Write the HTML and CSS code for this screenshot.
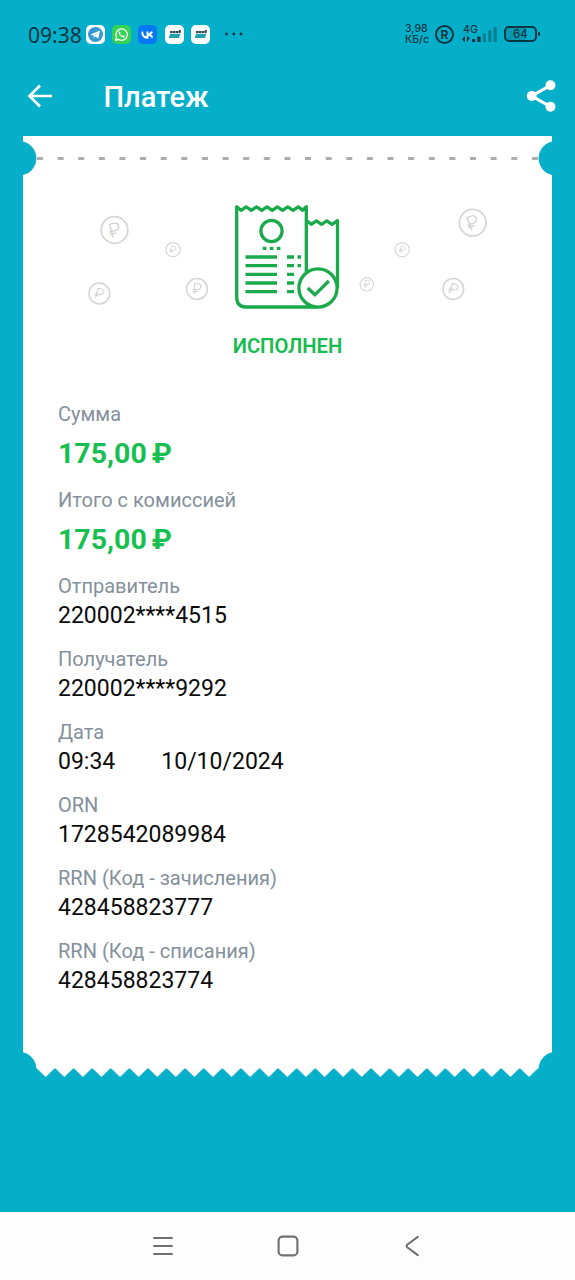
FILE: index.html
```html
<!DOCTYPE html>
<html lang="ru">
<head>
    <meta charset="UTF-8">
    <meta name="viewport" content="width=device-width, initial-scale=1.0">
    <title>Платеж</title>
    <link rel="stylesheet" href="styles.css">
</head>
<body>
    <div class="status-bar">
        <span class="clock">09:38</span>
        <div class="notifications">
            <svg class="app-icon" viewBox="0 0 19 19">
                <rect width="19" height="19" rx="5" fill="#fff"/>
                <circle cx="9.5" cy="9.5" r="7.5" fill="#3499d2"/>
                <path d="M4.5 9.4L14 5.6L12.4 13.6L9.4 11.4L7.8 12.8L7.6 10.6Z" fill="#fff"/>
                <path d="M7.6 10.6L12 7.3L8.6 11Z" fill="#9cc9e6"/>
            </svg>
            <svg class="app-icon" viewBox="0 0 19 19">
                <rect width="19" height="19" rx="5" fill="#35d255"/>
                <path d="M3.7 15.3L4.6 12.2A5.7 5.7 0 1 1 6.8 14.5Z" fill="none" stroke="#fff" stroke-width="1.3" stroke-linejoin="round"/>
                <path d="M7.1 6.4C6 7.6 6.7 9.3 8.2 10.8C9.7 12.3 11.6 13 12.5 11.9L12.6 11L11 10.2L10.2 11C9.2 10.6 8.3 9.7 7.9 8.8L8.6 8L7.9 6.3Z" fill="#fff"/>
            </svg>
            <svg class="app-icon" viewBox="0 0 19 19">
                <rect width="19" height="19" rx="5" fill="#0877f5"/>
                <path d="M4.2 6.6C4.4 10.5 6.2 12.7 9.5 12.7V6.6M9.5 9.8C11.6 9.6 13.3 8.3 14 6.6M9.9 9.6C12 9.8 13.7 11 14.4 12.7" fill="none" stroke="#fff" stroke-width="1.9"/>
            </svg>
            <svg class="app-icon" viewBox="0 0 19 19">
                <rect width="19" height="19" rx="5" fill="#fff"/>
                <path d="M5 7H15.5M14.8 5V8" stroke="#36434a" stroke-width="2" stroke-dasharray="2.4 .4"/>
                <path d="M5.2 8.8H15.4L14 13H3.6Z" fill="#259fac"/>
            </svg>
            <svg class="app-icon" viewBox="0 0 19 19">
                <rect width="19" height="19" rx="5" fill="#fff"/>
                <path d="M5 7H15.5M14.8 5V8" stroke="#36434a" stroke-width="2" stroke-dasharray="2.4 .4"/>
                <path d="M5.2 8.8H15.4L14 13H3.6Z" fill="#259fac"/>
            </svg>
        </div>
        <svg class="more" viewBox="0 0 20 4">
            <circle cx="2.5" cy="2" r="1.4"/>
            <circle cx="9.8" cy="2" r="1.4"/>
            <circle cx="17" cy="2" r="1.4"/>
        </svg>
        <div class="speed">
            <span class="speed-value">3,98</span>
            <span class="speed-unit">КБ/с</span>
        </div>
        <span class="registered">R</span>
        <div class="network">
            <span class="network-type">4G</span>
            <svg class="signal" viewBox="0 0 36 17">
                <path d="M2.2 10.5V15.5M5.5 10.5V15.5" stroke="#0b3742" stroke-width="1.3"/>
                <path d="M-.5 13L2.8 15.7V11.8ZM8.2 12.7L5 10V14Z" fill="#0b3742"/>
                <path d="M10 13h3.3v3H10zM15.3 10.5h3.3V16h-3.3z" fill="#0b3742"/>
                <path d="M20.8 7.5H24V16h-3.2zM26.3 4.3h3.2V16h-3.2zM31.6 1h3.2v15h-3.2z" fill="#087e93"/>
            </svg>
        </div>
        <div class="battery"><span class="battery-level">64</span></div>
    </div>

    <header class="app-bar">
        <svg class="back" viewBox="0 0 26 26">
            <path d="M14 2.5L3.5 13L14 23.5M3.5 13H26" fill="none" stroke="#fff" stroke-width="2.7"/>
        </svg>
        <h1 class="title">Платеж</h1>
        <svg class="share" viewBox="0 0 30 32">
            <path d="M24.5 5.3L5.7 16L24.5 26.7" fill="none" stroke="#fff" stroke-width="3.1"/>
            <circle cx="24.5" cy="5.3" r="5"/>
            <circle cx="5.7" cy="16" r="5"/>
            <circle cx="24.5" cy="26.7" r="5"/>
        </svg>
    </header>

    <main class="receipt">
        <!-- perforated top edge -->
        <svg class="receipt-top" viewBox="0 0 529 48">
            <rect width="529" height="48" fill="#fff"/>
            <path d="M14 22.5H516" stroke="#adadad" stroke-width="3" stroke-dasharray="6 14.62"/>
            <circle cx="-3.7" cy="22.3" r="17.1" fill="#05aec9"/>
            <circle cx="532.7" cy="22.3" r="17.1" fill="#05aec9"/>
        </svg>

        <svg class="artwork" viewBox="23 184 529 140">
            <g class="coins">
                <g transform="translate(114.5 230)"><circle r="13.3" stroke-width="1.8"/><text y="7" font-size="20" transform="rotate(-17)">₽</text></g>
                <g transform="translate(173 249.7)"><circle r="7.1" stroke-width="1.1"/><text y="3.6" font-size="10.5" transform="rotate(10)">₽</text></g>
                <g transform="translate(99.3 293.5)"><circle r="10.4" stroke-width="1.5"/><text y="5.3" font-size="15" transform="rotate(15)">₽</text></g>
                <g transform="translate(197 289)"><circle r="10.4" stroke-width="1.5"/><text y="5.3" font-size="15">₽</text></g>
                <g transform="translate(472.7 222.7)"><circle r="13.3" stroke-width="1.8"/><text y="7" font-size="20" transform="rotate(-22)">₽</text></g>
                <g transform="translate(402.2 249.7)"><circle r="7.1" stroke-width="1.1"/><text y="3.6" font-size="10.5" transform="rotate(12)">₽</text></g>
                <g transform="translate(366.8 284.3)"><circle r="6.7" stroke-width="1.1"/><text y="3.6" font-size="10.5">₽</text></g>
                <g transform="translate(453.3 289)"><circle r="10.4" stroke-width="1.5"/><text y="5.3" font-size="15" transform="rotate(20)">₽</text></g>
            </g>
            <g fill="none" stroke="#1aa94b" stroke-width="3.3" stroke-linejoin="round">
                <path d="M317 307H246Q236.7 307 236.7 297V206.7L241 210.3L246.2 206.9L251.4 210.3L256.6 206.9L261.8 210.3L267 206.9L272.2 210.3L277.4 206.9L282.6 210.3L287.8 206.9L293 210.3L298.2 206.9L302.5 210.3L306.3 206.7V272"/>
                <path d="M307 221L311.2 224.3L316.4 220.9L321.6 224.3L326.8 220.9L332 224.3L337.5 220.7V288"/>
                <circle cx="271.5" cy="231" r="10.6"/>
                <circle cx="318" cy="288" r="19.1" fill="#fff"/>
                <path d="M307.7 288L314.9 294.8L328.8 281" stroke-linejoin="miter"/>
                <path d="M262.8 248.3H281" stroke-dasharray="3.6 3.4"/>
                <path d="M245.5 257H277M245.5 265.7H277M245.5 274.4H277M245.5 283H277M245.5 291.7H277"/>
                <path d="M287 257H294M287 265.7H294M287 274.4H294M287 283H294M287 291.7H294M297.5 257H301M297.5 265.7H301"/>
            </g>
        </svg>

        <p class="state">ИСПОЛНЕН</p>

        <dl class="details">
            <div class="row amount">
                <dt>Сумма</dt>
                <dd>175,00 ₽</dd>
            </div>
            <div class="row amount">
                <dt>Итого с комиссией</dt>
                <dd>175,00 ₽</dd>
            </div>
            <div class="row">
                <dt>Отправитель</dt>
                <dd>220002****4515</dd>
            </div>
            <div class="row">
                <dt>Получатель</dt>
                <dd>220002****9292</dd>
            </div>
            <div class="row">
                <dt>Дата</dt>
                <dd class="date"><span>09:34</span><span>10/10/2024</span></dd>
            </div>
            <div class="row">
                <dt>ORN</dt>
                <dd>1728542089984</dd>
            </div>
            <div class="row">
                <dt>RRN (Код - зачисления)</dt>
                <dd>428458823777</dd>
            </div>
            <div class="row">
                <dt>RRN (Код - списания)</dt>
                <dd>428458823774</dd>
            </div>
        </dl>

        <!-- torn bottom edge -->
        <svg class="receipt-bottom" viewBox="0 0 529 27">
            <defs>
                <pattern id="teeth" x="13.4" y="18" width="18.59" height="9" patternUnits="userSpaceOnUse">
                    <path d="M0 0H18.59L9.3 9Z" fill="#fff"/>
                </pattern>
            </defs>
            <rect width="529" height="18.2" fill="#fff"/>
            <rect x="13.4" y="18" width="502" height="9" fill="url(#teeth)"/>
            <circle cx="-3.7" cy="19" r="17.1" fill="#05aec9"/>
            <circle cx="532.7" cy="19" r="17.1" fill="#05aec9"/>
        </svg>
    </main>

    <nav class="nav-bar">
        <svg viewBox="0 0 24 24">
            <path d="M3 4H21M3 12H21M3 20H21"/>
        </svg>
        <svg viewBox="0 0 24 24">
            <rect x="2.6" y="2.6" width="18.8" height="18.8" rx="4"/>
        </svg>
        <svg viewBox="0 0 24 24">
            <path d="M17.8 2.8L7.5 10.5Q5.7 12 7.5 13.5L17.8 21.2"/>
        </svg>
    </nav>
</body>
</html>
```
FILE: styles.css
```css
* {
    margin: 0;
    padding: 0;
    box-sizing: border-box;
}

body {
    height: 1280px;
    display: flex;
    flex-direction: column;
    background: #05aec9;
    font-family: Roboto, 'Noto Sans', sans-serif;
    overflow: hidden;
}

svg {
    display: block;
    flex-shrink: 0;
}

/* Status bar */
.status-bar {
    height: 68px;
    display: flex;
    align-items: center;
    padding: 0 38px 0 28px;
    color: #0b3742;
}

.clock {
    width: 57.5px;
    padding-top: 1px;
    font-family: 'Noto Sans', sans-serif;
    font-size: 21px;
    line-height: 24px;
}

.notifications {
    display: flex;
    gap: 7.4px;
}

.app-icon {
    width: 19px;
    height: 19px;
}

.more {
    width: 20px;
    height: 4px;
    margin-left: 14px;
    fill: #0b3742;
}

.speed {
    display: flex;
    flex-direction: column;
    width: 24px;
    margin-left: auto;
    padding-top: 1px;
    font-family: Inter, sans-serif;
    font-weight: 500;
    font-size: 10.5px;
    line-height: 10.5px;
    white-space: nowrap;
}

.speed-unit {
    font-size: 10.5px;
}

.registered {
    width: 19px;
    height: 19px;
    margin-left: 6px;
    border: 2px solid #0b3742;
    border-radius: 50%;
    font-family: Inter, sans-serif;
    font-size: 12px;
    font-weight: 700;
    line-height: 15px;
    text-align: center;
}

.network {
    position: relative;
    margin-left: 8px;
}

.network-type {
    position: absolute;
    top: -1px;
    left: 1px;
    font-family: Inter, sans-serif;
    font-size: 10.5px;
    font-weight: 500;
    line-height: 10px;
}

.signal {
    width: 36px;
    height: 17px;
}

.battery {
    position: relative;
    width: 33px;
    height: 16px;
    margin-left: 6px;
    border: 2px solid #0b3742;
    border-radius: 5px;
    background: linear-gradient(90deg, #0699b1 64%, transparent 64%);
    text-align: center;
}

.battery::after {
    content: '';
    position: absolute;
    top: 4px;
    right: -5px;
    width: 2px;
    height: 4px;
    border-radius: 1px;
    background: #0b3742;
}

.battery-level {
    display: block;
    font-family: Inter, sans-serif;
    font-size: 11.5px;
    font-weight: 500;
    line-height: 13px;
}

/* App bar */
.app-bar {
    height: 68px;
    display: flex;
    align-items: center;
    padding: 0 19.5px 12px 26px;
}

.back {
    width: 26px;
    height: 26px;
}

.title {
    margin-left: 51.5px;
    padding-top: 2px;
    color: #fff;
    font-size: 29px;
    font-weight: 500;
    line-height: 34px;
}

.share {
    width: 30px;
    height: 32px;
    margin-left: auto;
    fill: #fff;
}

/* Receipt */
.receipt {
    width: 529px;
    margin: 0 23px;
}

.receipt-top {
    width: 529px;
    height: 48px;
}

.artwork {
    width: 529px;
    height: 140px;
    background: #fff;
}

.coins circle {
    fill: none;
    stroke: #d6d6d6;
}

.coins text {
    fill: #cecece;
    font-weight: 300;
    text-anchor: middle;
}

.state {
    height: 76px;
    padding-top: 10px;
    background: #fff;
    color: #17bb50;
    font-size: 20.2px;
    font-weight: 600;
    line-height: 24px;
    text-align: center;
}

.details {
    height: 650px;
    padding: 0 35px;
    background: #fff;
}

.row {
    height: 73px;
}

.row dt {
    color: #84909b;
    font-size: 20.05px;
    line-height: 28px;
}

.row dd {
    color: #0b0b0b;
    font-size: 23px;
    line-height: 32px;
}

.amount {
    height: 86px;
}

.amount dd {
    color: #17bf51;
    font-size: 28.5px;
    font-weight: 700;
    line-height: 51px;
    word-spacing: -2px;
}

.date {
    display: flex;
    gap: 46px;
}

.receipt-bottom {
    width: 529px;
    height: 27px;
}

/* System navigation */
.nav-bar {
    height: 68px;
    margin-top: auto;
    display: flex;
    justify-content: center;
    align-items: center;
    gap: 100.5px;
    background: #fdfdfd;
}

.nav-bar svg {
    width: 24px;
    height: 24px;
    fill: none;
    stroke: #707070;
    stroke-width: 2.1;
    stroke-linecap: round;
}
```
